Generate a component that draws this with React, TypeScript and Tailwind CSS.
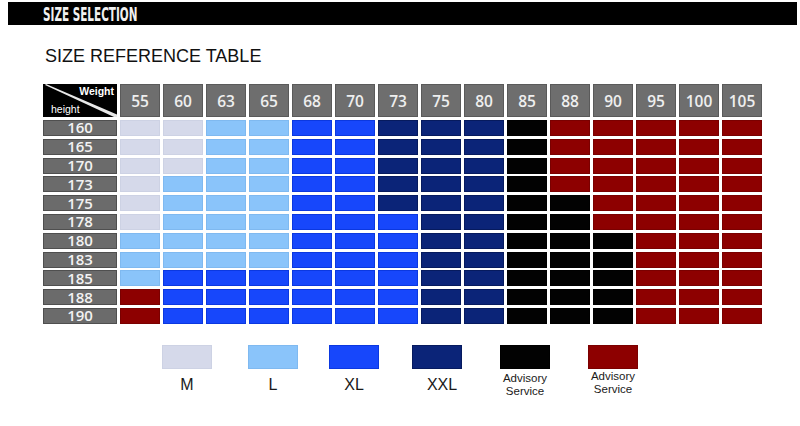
import React from "react";

const weights = ["55", "60", "63", "65", "68", "70", "73", "75", "80", "85", "88", "90", "95", "100", "105"];

const rows: [string, string][] = [
  ["160", "mmllxxnnnbrrrrr"],
  ["165", "mmllxxnnnbrrrrr"],
  ["170", "mmllxxnnnbrrrrr"],
  ["173", "mlllxxnnnbrrrrr"],
  ["175", "mlllxxnnnbbrrrr"],
  ["178", "mlllxxxnnbbrrrr"],
  ["180", "llllxxxnnbbbrrr"],
  ["183", "llllxxxnnbbbrrr"],
  ["185", "lxxxxxxnnbbbrrr"],
  ["188", "rxxxxxxnnbbbrrr"],
  ["190", "rxxxxxxnnbbbrrr"],
];

const cellClass: Record<string, string> = {
  m: "bg-[#d5d9ea] border-[#cdd2e4]",
  l: "bg-[#8ac4fa] border-[#7fb9f0]",
  x: "bg-[#1747fb] border-[#0b38e0]",
  n: "bg-[#0b2478] border-[#061a5e]",
  b: "bg-[#020202] border-[#000000]",
  r: "bg-[#8d0000] border-[#7a0000]",
};

const legend = [
  { code: "m", label: "M", ml: "ml-[162px]", two: false, shift: "" },
  { code: "l", label: "L", ml: "ml-[36px]", two: false, shift: "" },
  { code: "x", label: "XL", ml: "ml-[31px]", two: false, shift: "" },
  { code: "n", label: "XXL", ml: "ml-[33px]", two: false, shift: "translate-x-[5px]" },
  { code: "b", label: "Advisory Service", ml: "ml-[38px]", two: true, shift: "mt-[3px]" },
  { code: "r", label: "Advisory Service", ml: "ml-[38px]", two: true, shift: "mt-[1px]" },
];

export default function App() {
  return (
    <div className="w-[800px] h-[426px] bg-white overflow-hidden" style={{ fontFamily: '"Liberation Sans", Arial, sans-serif' }}>
      {/* Top bar */}
      <div className="mt-[2px] mx-[8px] w-[789px] h-[23px] bg-black flex items-center pl-[35px]">
        <span
          className="inline-block origin-left scale-x-[0.58] text-[20px] font-bold leading-none text-[#f0f0f0] whitespace-nowrap"
          style={{ fontFamily: '"DejaVu Sans Condensed", "DejaVu Sans", sans-serif', fontStretch: "condensed" }}
        >
          SIZE SELECTION
        </span>
      </div>

      {/* Title */}
      <div className="mt-[21px] ml-[45px] text-[18px] leading-[20px] text-[#111]">SIZE REFERENCE TABLE</div>

      {/* Table */}
      <div
        className="mt-[18px] ml-[43px] grid grid-cols-[74px_repeat(15,40px)] grid-rows-[33.2px_repeat(11,16px)] gap-x-[3px] gap-y-[2.8px] w-[719px]"
        style={{ fontFamily: '"Open Sans", "DejaVu Sans", sans-serif' }}
      >
        {/* Corner */}
        <div className="relative bg-black overflow-hidden" style={{ fontFamily: '"Liberation Sans", Arial, sans-serif' }}>
          <svg className="absolute inset-0" width="74" height="33" viewBox="0 0 74 33">
            <polygon points="3,0 74,30.5 74,33 71,33 2,1" fill="#e8e8e8" />
          </svg>
          <div className="absolute right-[3px] top-[1px] text-[10.5px] font-bold leading-[12px] text-white">Weight</div>
          <div className="absolute left-[8px] top-[19px] text-[10.5px] leading-[12px] text-white">height</div>
        </div>
        {weights.map((w) => (
          <div
            key={w}
            className="bg-[#6e6e6e] border border-[#5a5a5a] flex items-center justify-center pt-[2px] text-[15.5px] font-semibold leading-none text-[#efefef]"
          >
            {w}
          </div>
        ))}
        {rows.map(([h, codes]) => (
          <React.Fragment key={h}>
            <div className="bg-[#6b6b6b] border border-[#4f4f4f] flex items-center justify-center text-[15px] font-semibold leading-none text-[#f2f2f2]">
              {h}
            </div>
            {codes.split("").map((c, i) => (
              <div key={i} className={`border ${cellClass[c]}`} />
            ))}
          </React.Fragment>
        ))}
      </div>

      {/* Legend */}
      <div className="mt-[21px] flex items-start">
        {legend.map((item, i) => (
          <div key={i} className={`${item.ml} w-[50px] flex flex-col items-center`}>
            <div className={`w-[50px] h-[24px] border ${cellClass[item.code]}`} />
            {item.two ? (
              <div className={`${item.shift} text-[11.5px] leading-[13px] text-[#1a1a1a] text-center whitespace-nowrap`}>
                <div>Advisory</div>
                <div>Service</div>
              </div>
            ) : (
              <div className={`${item.shift} mt-[8px] text-[16px] leading-[16px] text-[#1a1a1a] text-center whitespace-nowrap`}>
                {item.label}
              </div>
            )}
          </div>
        ))}
      </div>
    </div>
  );
}
